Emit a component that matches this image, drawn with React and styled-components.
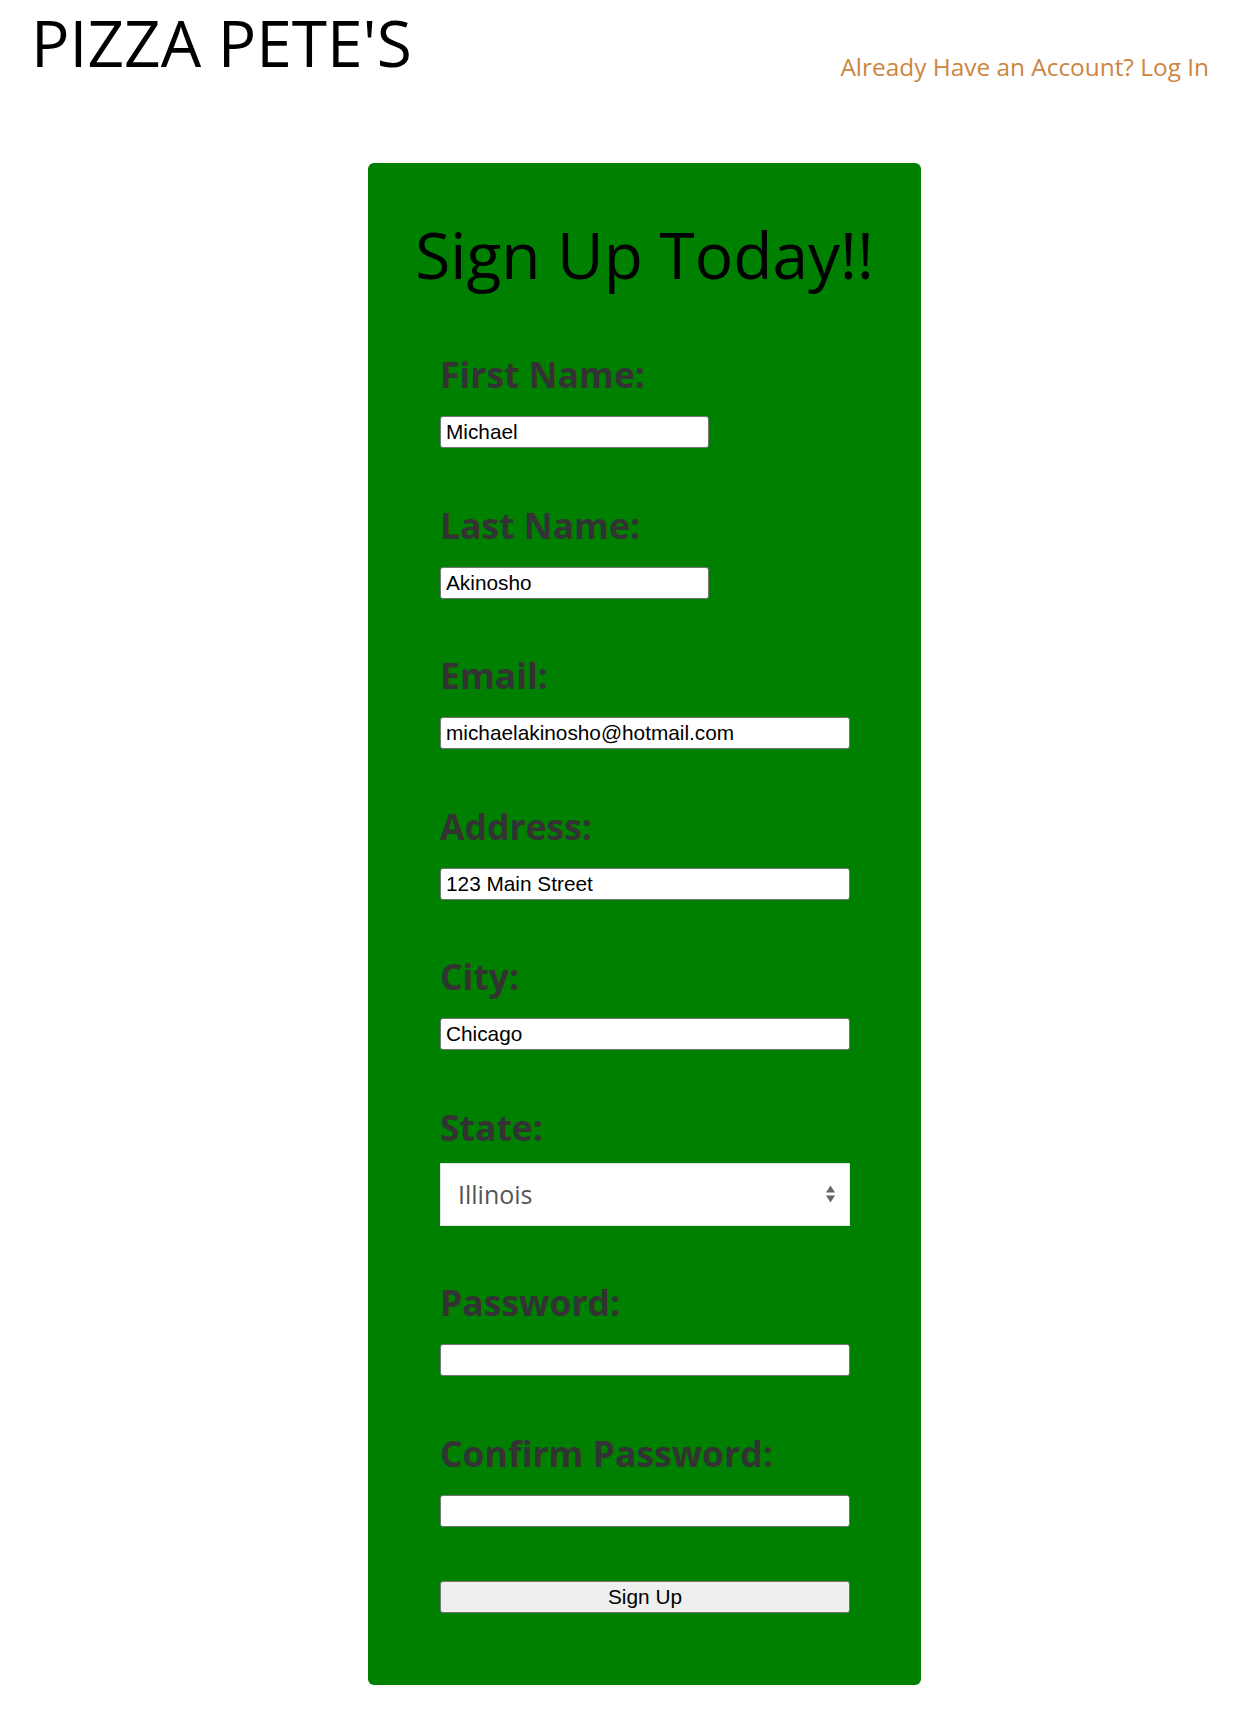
import React, { useState } from "react";
import styled, { createGlobalStyle } from "styled-components";

const GlobalStyle = createGlobalStyle`
  body {
    margin: 0;
    background: #fff;
    font-family: "Open Sans", "Noto Sans", sans-serif;
  }
`;

const Header = styled.header`
  display: flex;
  justify-content: space-between;
  align-items: flex-start;
  padding: 0 26px 0 31px;
`;

const Logo = styled.h1`
  margin: 0;
  font-size: 64px;
  line-height: 86px;
  font-weight: 400;
  color: #000;
`;

const LoginLink = styled.a`
  margin-top: 50px;
  font-size: 24.4px;
  line-height: 34px;
  color: peru;
  text-decoration: none;
  cursor: pointer;
`;

const Card = styled.form`
  width: 553px;
  box-sizing: border-box;
  margin: 77px 0 28px 368px;
  padding: 57px 72px 72px;
  background: #008000;
  border-radius: 6px;
  display: flex;
  flex-direction: column;
`;

const Title = styled.h2`
  margin: 0 -72px 64px;
  text-align: center;
  font-size: 64px;
  line-height: 70px;
  font-weight: 400;
  color: #000;
`;

const Field = styled.div`
  display: flex;
  flex-direction: column;
  margin-bottom: 56.5px;
`;

const Label = styled.label`
  font-size: 35.5px;
  line-height: 40px;
  font-weight: 700;
  color: #333;
  margin-bottom: ${(p) => (p.$tight ? "16px" : "22px")};
`;

const Input = styled.input`
  box-sizing: border-box;
  width: ${(p) => (p.$short ? "269px" : "410px")};
  height: 32px;
  padding: 0 5px;
  border: 1px solid #767676;
  border-radius: 3px;
  background: #fff;
  font-family: "Liberation Sans", Arial, sans-serif;
  font-size: 20.8px;
  color: #000;
`;

const SelectWrap = styled.div`
  position: relative;
  width: 410px;
`;

const Select = styled.select`
  appearance: none;
  box-sizing: border-box;
  width: 100%;
  height: 63px;
  padding: 0 40px 0 17px;
  border: 1px solid #e4e4e4;
  border-radius: 0;
  background: #fff;
  font-family: "Open Sans", "Noto Sans", sans-serif;
  font-size: 25px;
  color: #555;
`;

const Arrows = styled.svg`
  position: absolute;
  right: 15px;
  top: 22px;
  pointer-events: none;
`;

const Button = styled.button`
  box-sizing: border-box;
  width: 410px;
  height: 32px;
  margin-top: -2px;
  border: 1px solid #767676;
  border-radius: 3px;
  background: #efefef;
  font-family: "Liberation Sans", Arial, sans-serif;
  font-size: 20.8px;
  color: #000;
  cursor: pointer;
`;

export default function App() {
  const [form, setForm] = useState({
    first: "Michael",
    last: "Akinosho",
    email: "michaelakinosho@hotmail.com",
    address: "123 Main Street",
    city: "Chicago",
    state: "IL",
    password: "",
    confirm: "",
  });

  const update = (key) => (e) => setForm({ ...form, [key]: e.target.value });

  return (
    <>
      <GlobalStyle />
      <Header>
        <Logo>PIZZA PETE'S</Logo>
        <LoginLink>Already Have an Account? Log In</LoginLink>
      </Header>
      <Card onSubmit={(e) => e.preventDefault()}>
        <Title>Sign Up Today!!</Title>
        <Field>
          <Label>First Name:</Label>
          <Input $short value={form.first} onChange={update("first")} />
        </Field>
        <Field>
          <Label>Last Name:</Label>
          <Input $short value={form.last} onChange={update("last")} />
        </Field>
        <Field>
          <Label>Email:</Label>
          <Input value={form.email} onChange={update("email")} />
        </Field>
        <Field>
          <Label>Address:</Label>
          <Input value={form.address} onChange={update("address")} />
        </Field>
        <Field>
          <Label>City:</Label>
          <Input value={form.city} onChange={update("city")} />
        </Field>
        <Field>
          <Label $tight>State:</Label>
          <SelectWrap>
            <Select value={form.state} onChange={update("state")}>
              <option value="IL">Illinois</option>
              <option value="IN">Indiana</option>
              <option value="WI">Wisconsin</option>
            </Select>
            <Arrows width="9" height="18" viewBox="0 0 9 18">
              <path d="M4.5 0.5 L9 7.5 H0 Z" fill="#666" />
              <path d="M4.5 17.5 L9 10.5 H0 Z" fill="#666" />
            </Arrows>
          </SelectWrap>
        </Field>
        <Field>
          <Label>Password:</Label>
          <Input type="password" value={form.password} onChange={update("password")} />
        </Field>
        <Field>
          <Label>Confirm Password:</Label>
          <Input type="password" value={form.confirm} onChange={update("confirm")} />
        </Field>
        <Button type="submit">Sign Up</Button>
      </Card>
    </>
  );
}
